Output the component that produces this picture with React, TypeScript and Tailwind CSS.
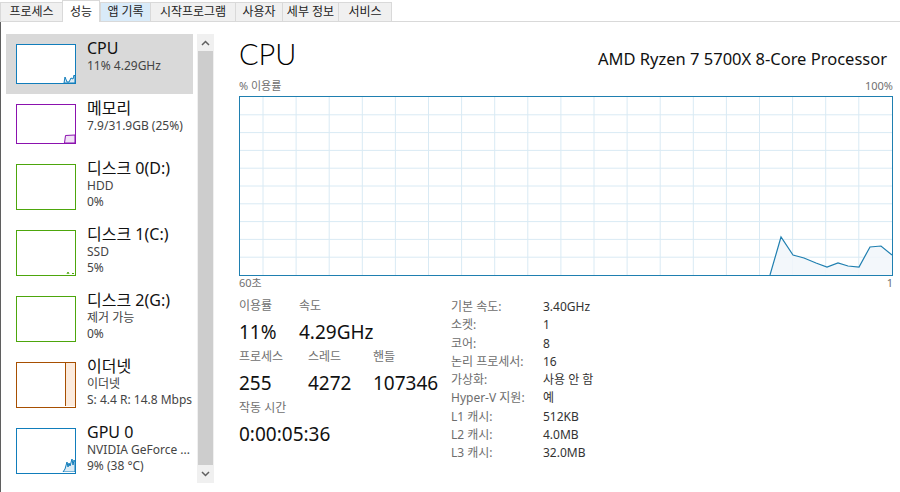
import React from "react";

const tabs = [
  { label: "프로세스", w: "w-[62px]" },
  { label: "성능", w: "w-[38px]", active: true },
  { label: "앱 기록", w: "w-[50px]", hover: true },
  { label: "시작프로그램", w: "w-[85px]" },
  { label: "사용자", w: "w-[47px]" },
  { label: "세부 정보", w: "w-[56px]" },
  { label: "서비스", w: "w-[54px]" },
];

const specs: [string, string][] = [
  ["기본 속도:", "3.40GHz"],
  ["소켓:", "1"],
  ["코어:", "8"],
  ["논리 프로세서:", "16"],
  ["가상화:", "사용 안 함"],
  ["Hyper-V 지원:", "예"],
  ["L1 캐시:", "512KB"],
  ["L2 캐시:", "4.0MB"],
  ["L3 캐시:", "32.0MB"],
];

// usage samples, in graph pixel space (652 x 178)
const cpuLine: [number, number][] = [
  [530, 178],
  [541, 140],
  [553, 158],
  [564, 161],
  [576, 166],
  [587, 170],
  [598, 166],
  [608, 169],
  [619, 170],
  [630, 150],
  [641, 149],
  [652, 158],
];

function TabBar() {
  return (
    <div className="flex items-end h-[22px] border-b border-[#d9d9d9] text-[12px] text-[#222]">
      {tabs.map((t, i) => (
        <div
          key={t.label}
          className={[
            "flex items-center justify-center border-t border-l border-[#d9d9d9]",
            t.w,
            i === tabs.length - 1 ? "border-r" : "",
            t.active
              ? "h-[22px] -mb-px bg-white border-r relative z-10"
              : t.hover
                ? "h-[19px] bg-[#d9ebf9] border-[#c3dbf1]"
                : "h-[19px] bg-[#f0f0f0]",
          ].join(" ")}
        >
          <span className="leading-none">{t.label}</span>
        </div>
      ))}
    </div>
  );
}

function Thumb({
  border,
  h,
  children,
}: {
  border: string;
  h: number;
  children?: React.ReactNode;
}) {
  return (
    <div className={`w-[60px] h-full border bg-white ${border}`}>
      <svg width="58" height={h} className="block">
        {children}
      </svg>
    </div>
  );
}

function SideItem({
  height,
  selected,
  thumb,
  title,
  lines,
}: {
  height: string;
  selected?: boolean;
  thumb: React.ReactNode;
  title: string;
  lines: string[];
}) {
  return (
    <div className={`flex w-[187px] ${height} ${selected ? "bg-[#d9d9d9]" : ""}`}>
      <div className="py-[10px] pl-[10px] shrink-0">{thumb}</div>
      <div className="pl-[11px] pt-[4px] whitespace-nowrap">
        <div className="text-[16px] leading-[20px] text-[#111]">{title}</div>
        {lines.map((l) => (
          <div key={l} className="text-[12px] leading-[16px] text-[#444]">
            {l}
          </div>
        ))}
      </div>
    </div>
  );
}

function Chevron({ down }: { down?: boolean }) {
  return (
    <svg width="9" height="6" viewBox="0 0 9 6">
      <polyline
        points={down ? "1,1 4.5,4.5 8,1" : "1,5 4.5,1.5 8,5"}
        fill="none"
        stroke="#606060"
        strokeWidth="1.5"
      />
    </svg>
  );
}

function Sidebar() {
  return (
    <div className="flex pl-[5px] pt-[12px] shrink-0">
      <div className="w-[190px] overflow-hidden">
        <SideItem
          height="h-[60px]"
          selected
          title="CPU"
          lines={["11% 4.29GHz"]}
          thumb={
            <Thumb border="border-[#117dbb]" h={38}>
              <polygon
                points="47,38 48,32 50,37 52,37 54,33 56,34 57,30 58,31 58,38"
                fill="#dcebf5"
                stroke="#117dbb"
                strokeWidth="1"
              />
            </Thumb>
          }
        />
        <SideItem
          height="h-[60px]"
          title="메모리"
          lines={["7.9/31.9GB (25%)"]}
          thumb={
            <Thumb border="border-[#8b12ae]" h={38}>
              <polygon
                points="47.5,38 48.5,30.5 58,30 58,38"
                fill="#f2e2f7"
                stroke="#8b12ae"
                strokeWidth="1"
              />
            </Thumb>
          }
        />
        <SideItem
          height="h-[66px]"
          title="디스크 0(D:)"
          lines={["HDD", "0%"]}
          thumb={<Thumb border="border-[#4da60c]" h={44} />}
        />
        <SideItem
          height="h-[66px]"
          title="디스크 1(C:)"
          lines={["SSD", "5%"]}
          thumb={
            <Thumb border="border-[#4da60c]" h={43}>
              <polyline points="50,43 51,41 52,43" fill="none" stroke="#4da60c" strokeWidth="1" />
              <polyline points="55,43 56,42 57,43" fill="none" stroke="#4da60c" strokeWidth="1" />
            </Thumb>
          }
        />
        <SideItem
          height="h-[66px]"
          title="디스크 2(G:)"
          lines={["제거 가능", "0%"]}
          thumb={<Thumb border="border-[#4da60c]" h={43} />}
        />
        <SideItem
          height="h-[66px]"
          title="이더넷"
          lines={["이더넷", "S: 4.4 R: 14.8 Mbps"]}
          thumb={
            <Thumb border="border-[#a74f01]" h={43}>
              <rect x="48" y="0" width="10" height="43" fill="#fcebdd" />
              <line x1="48.5" y1="0" x2="48.5" y2="43" stroke="#a74f01" strokeWidth="1" />
            </Thumb>
          }
        />
        <SideItem
          height="h-[66px]"
          title="GPU 0"
          lines={["NVIDIA GeForce ...", "9% (38 °C)"]}
          thumb={
            <Thumb border="border-[#117dbb]" h={43}>
              <polygon
                points="46,43 48,40 50,33 51,38 52,34 53,37 55,30 56,36 57,31 58,33 58,43"
                fill="#dcebf5"
                stroke="#117dbb"
                strokeWidth="1"
              />
            </Thumb>
          }
        />
      </div>
      {/* scrollbar */}
      <div className="ml-px w-[17px] h-[449px] bg-[#f0f0f0] flex flex-col">
        <div className="h-[17px] flex items-center justify-center">
          <Chevron />
        </div>
        <div className="flex-1 mx-px bg-[#cdcdcd]" />
        <div className="h-[18px] flex items-center justify-center">
          <Chevron down />
        </div>
      </div>
    </div>
  );
}

function UsageGraph() {
  const w = 652;
  const h = 178;
  const cols = Array.from({ length: 19 }, (_, k) => 23 + k * 33.1);
  const rows = Array.from({ length: 9 }, (_, k) => (k + 1) * 17.8);
  const pts = cpuLine.map(([x, y]) => `${x},${y}`).join(" ");
  return (
    <div className="w-[654px] h-[180px] border border-[#1f7fb0] bg-white">
      <svg width={w} height={h} className="block">
        {cols.map((x) => (
          <line key={`c${x}`} x1={x} y1={0} x2={x} y2={h} stroke="#d9eaf4" strokeWidth="1" />
        ))}
        {rows.map((y) => (
          <line key={`r${y}`} x1={0} y1={y} x2={w} y2={y} stroke="#d9eaf4" strokeWidth="1" />
        ))}
        <polygon points={`${pts} 652,178`} fill="#f1f6fa" fillOpacity="0.85" />
        <polyline points={pts} fill="none" stroke="#1f7fb0" strokeWidth="1.2" />
      </svg>
    </div>
  );
}

function Stat({ label, value, w }: { label: string; value: string; w?: string }) {
  return (
    <div className={w ?? ""}>
      <div className="text-[12px] leading-[18px] text-[#707070]">{label}</div>
      <div className="mt-[4px] mb-[3px] text-[19px] leading-[26px] text-[#111]">{value}</div>
    </div>
  );
}

function Detail() {
  return (
    <div className="pl-[25px] pt-[14px] w-[679px]">
      <div className="flex items-baseline justify-between w-[654px]">
        <div className="font-['Lato',sans-serif] text-[29px] leading-[36px] font-light text-black">CPU</div>
        <div className="text-[16.5px] pr-[6px] text-[#111]">AMD Ryzen 7 5700X 8-Core Processor</div>
      </div>
      <div className="mt-[6px] flex justify-between w-[654px] text-[11px] leading-[16px] text-[#707070]">
        <span>% 이용률</span>
        <span>100%</span>
      </div>
      <div className="mt-[2px]">
        <UsageGraph />
      </div>
      <div className="flex justify-between w-[654px] text-[11px] leading-[14px] text-[#707070]">
        <span>60초</span>
        <span>1</span>
      </div>

      <div className="mt-[7px] flex">
        <div className="w-[212px] shrink-0">
          <div className="flex">
            <Stat w="w-[60px]" label="이용률" value="11%" />
            <Stat label="속도" value="4.29GHz" />
          </div>
          <div className="flex">
            <Stat w="w-[69px]" label="프로세스" value="255" />
            <Stat w="w-[65px]" label="스레드" value="4272" />
            <Stat label="핸들" value="107346" />
          </div>
          <Stat label="작동 시간" value="0:00:05:36" />
        </div>
        <div className="pt-[1px] text-[12px] leading-[18.3px]">
          {specs.map(([k, v]) => (
            <div key={k} className="flex">
              <span className="w-[92px] text-[#6d6d6d]">{k}</span>
              <span className="text-[#333]">{v}</span>
            </div>
          ))}
        </div>
      </div>
    </div>
  );
}

export default function App() {
  return (
    <div className="w-[900px] h-[492px] overflow-hidden bg-white font-['Noto_Sans','Noto_Sans_CJK_KR',sans-serif]">
      <TabBar />
      <div className="flex h-[470px] border-l border-[#5f5f5f]">
        <Sidebar />
        <Detail />
      </div>
    </div>
  );
}
